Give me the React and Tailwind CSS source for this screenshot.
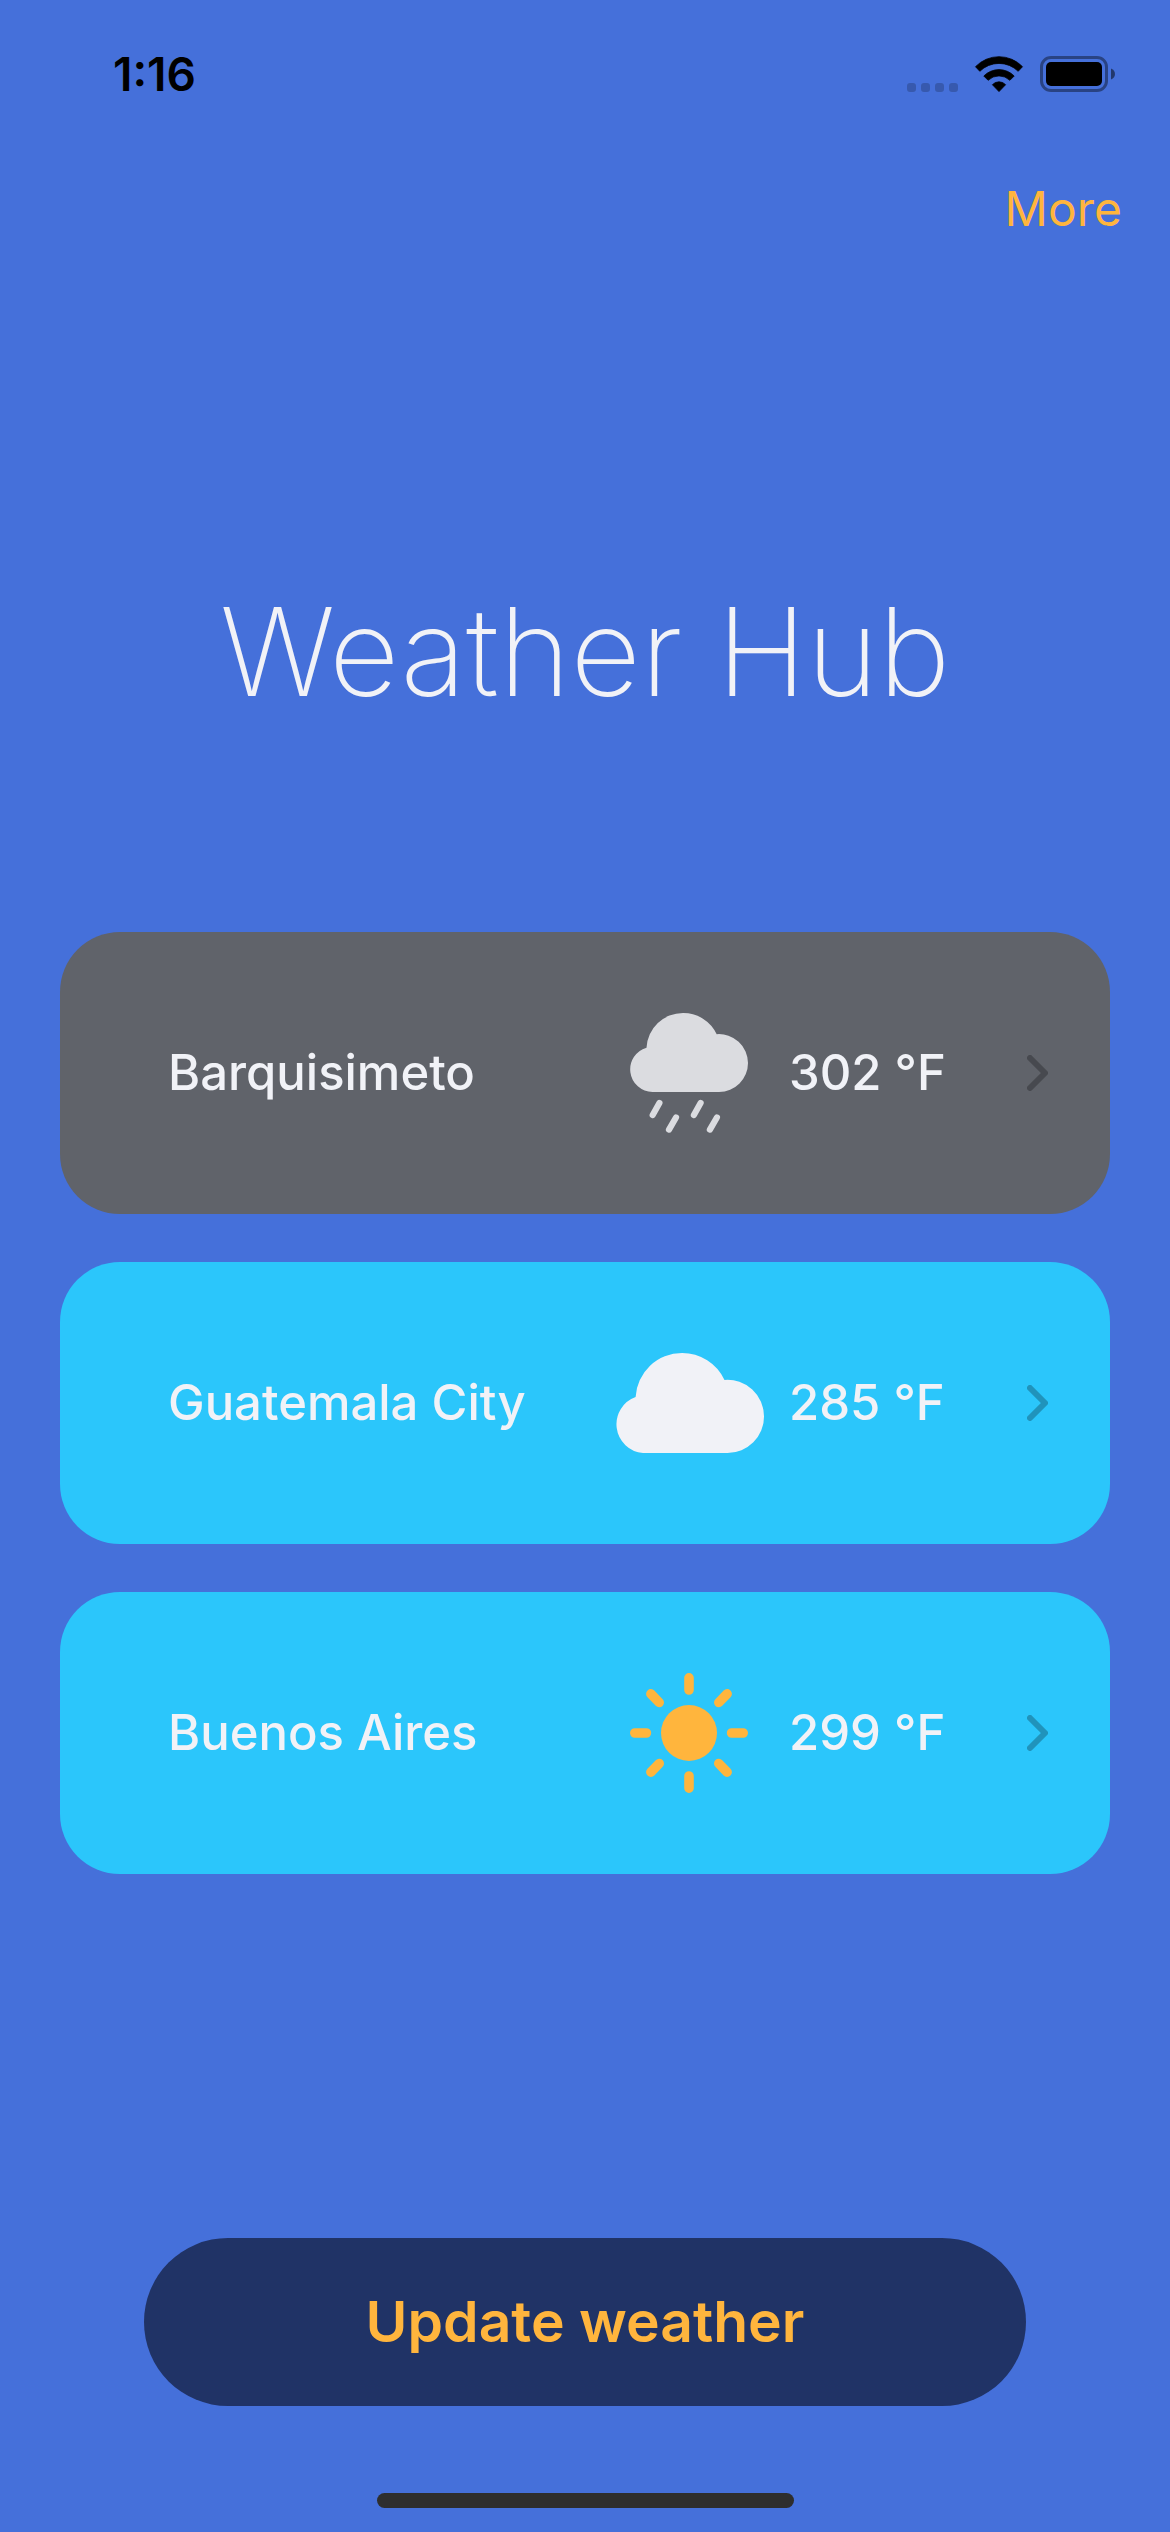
function Cellular() {
  return (
    <div className="flex gap-[5px] self-end" aria-hidden="true">
      {[0, 1, 2, 3].map((i) => (
        <span key={i} className="size-[9px] rounded-[3px] bg-black/20" />
      ))}
    </div>
  );
}

function Wifi() {
  return (
    <svg viewBox="0 0 48 36" className="h-9 w-12 overflow-visible" fill="black" stroke="black" strokeWidth="0.8" strokeLinejoin="round" aria-hidden="true">
      <path d="M0.5 10.7A32.6 32.6 0 0 1 47.5 10.7L43.2 15.3A27.3 27.3 0 0 0 4.8 15.3Z" />
      <path d="M8.8 20A21.3 21.3 0 0 1 39.2 20L34.9 24.3A15.7 15.7 0 0 0 13.1 24.3Z" />
      <path d="M17.4 28.7A9 9 0 0 1 30.6 28.7L24 35.6Z" />
    </svg>
  );
}

function Battery() {
  return (
    <svg viewBox="0 0 76 36" className="h-9 w-[76px]" aria-hidden="true">
      <rect x="1.5" y="1.5" width="65" height="33" rx="9.5" fill="none" stroke="black" strokeOpacity="0.4" strokeWidth="3" />
      <rect x="6" y="6" width="56" height="24" rx="5" fill="black" />
      <path d="M71 12.5C76.3 14.5 76.3 21.5 71 23.5Z" fill="black" fillOpacity="0.5" />
    </svg>
  );
}

function RainIcon() {
  return (
    <svg viewBox="0 0 118 120" className="h-[120px] w-[118px] overflow-visible text-[#dbdce0]" aria-hidden="true">
      <path
        fill="currentColor"
        d="M22.5 79A22.6 22.6 0 0 1 16.5 34.7A36.6 36.6 0 0 1 53 0A36.8 36.8 0 0 1 86.7 21.2A29 29 0 0 1 118 50A29 29 0 0 1 89 79Z"
      />
      <path
        fill="none"
        stroke="currentColor"
        strokeWidth="6.2"
        strokeLinecap="round"
        d="M29.4 90L22.7 102M46 104.5L39 116.6M70.6 90L63.9 102M86.9 104.5L79.9 116.6"
      />
    </svg>
  );
}

function CloudIcon() {
  return (
    <svg viewBox="0 0 150 100" className="h-[100px] w-[150px] overflow-visible text-[#f1f2f7]" aria-hidden="true">
      <path
        fill="currentColor"
        d="M29 100A28.9 28.9 0 0 1 21.6 44A46.5 46.5 0 0 1 68 0A46.8 46.8 0 0 1 110.5 27A36.5 36.5 0 0 1 150 63.5A36.5 36.5 0 0 1 113.5 100Z"
      />
    </svg>
  );
}

function SunIcon() {
  return (
    <svg viewBox="0 0 118 120" className="h-[120px] w-[118px] text-[#ffb53d]" aria-hidden="true">
      <circle cx="59" cy="60" r="28" fill="currentColor" />
      <path
        fill="none"
        stroke="currentColor"
        strokeWidth="9.6"
        strokeLinecap="round"
        d="M59 4.8V17M59 103V115.2M4.8 60H16.4M101.6 60H113.2M20.9 20.9L29.2 29.5M97.1 20.9L88.8 29.5M20.9 99.1L29.2 90.5M97.1 99.1L88.8 90.5"
      />
    </svg>
  );
}

function Chevron() {
  return (
    <svg viewBox="0 0 21 36" className="h-9 w-[21px] shrink-0 opacity-25" aria-hidden="true">
      <path d="M3 3L18 18L3 33" fill="none" stroke="black" strokeWidth="6" strokeLinecap="round" strokeLinejoin="round" />
    </svg>
  );
}

const cities = [
  { name: "Barquisimeto", temperature: "302 °F", Icon: RainIcon, background: "bg-[#60636a]" },
  { name: "Guatemala City", temperature: "285 °F", Icon: CloudIcon, background: "bg-[#2bc6fb]" },
  { name: "Buenos Aires", temperature: "299 °F", Icon: SunIcon, background: "bg-[#2bc6fb]" },
];

function CityCard({ name, temperature, Icon, background }) {
  return (
    <button
      type="button"
      className={`flex h-[282px] w-full items-center rounded-[60px] pr-[62px] pl-[108px] text-left text-[49px] leading-[60px] font-medium text-[#f1f2f7] ${background}`}
    >
      <span className="flex-1">{name}</span>
      <span className="flex w-[150px] shrink-0 justify-center">
        <Icon />
      </span>
      <span className="w-[263px] shrink-0 pl-[25px] whitespace-nowrap">{temperature}</span>
      <Chevron />
    </button>
  );
}

export default function App() {
  return (
    <div className="flex min-h-screen flex-col bg-[#4570da] font-['Inter',sans-serif]">
      <header className="flex h-[140px] items-start justify-between pt-[54px] pr-[54px] pl-[113px]">
        <time className="text-[46px] leading-10 font-semibold text-black">1:16</time>
        <div className="flex h-[38px] items-end">
          <Cellular />
          <span className="ml-[17px]">
            <Wifi />
          </span>
          <span className="ml-[17px]">
            <Battery />
          </span>
        </div>
      </header>

      <nav className="flex h-[138px] items-center justify-end pr-12">
        <button type="button" className="text-[48px] leading-[60px] text-[#ffb53d]">
          More
        </button>
      </nav>

      <main className="flex flex-1 flex-col px-[60px]">
        <h1 className="mt-[286px] text-center text-[122px] leading-[176px] font-extralight whitespace-nowrap text-[#f1f2f7]">
          Weather Hub
        </h1>
        <div className="mt-48 flex flex-col gap-12">
          {cities.map((city) => (
            <CityCard key={city.name} {...city} />
          ))}
        </div>
        <button
          type="button"
          className="mx-[84px] mt-auto h-[168px] rounded-full bg-[#203366] text-[57px] leading-[72px] font-semibold text-[#ffb53d]"
        >
          Update weather
        </button>
      </main>

      <footer className="flex h-[126px] items-end justify-center pb-6">
        <div className="h-[15px] w-[417px] rounded-full bg-[#2e2e2e]" />
      </footer>
    </div>
  );
}
